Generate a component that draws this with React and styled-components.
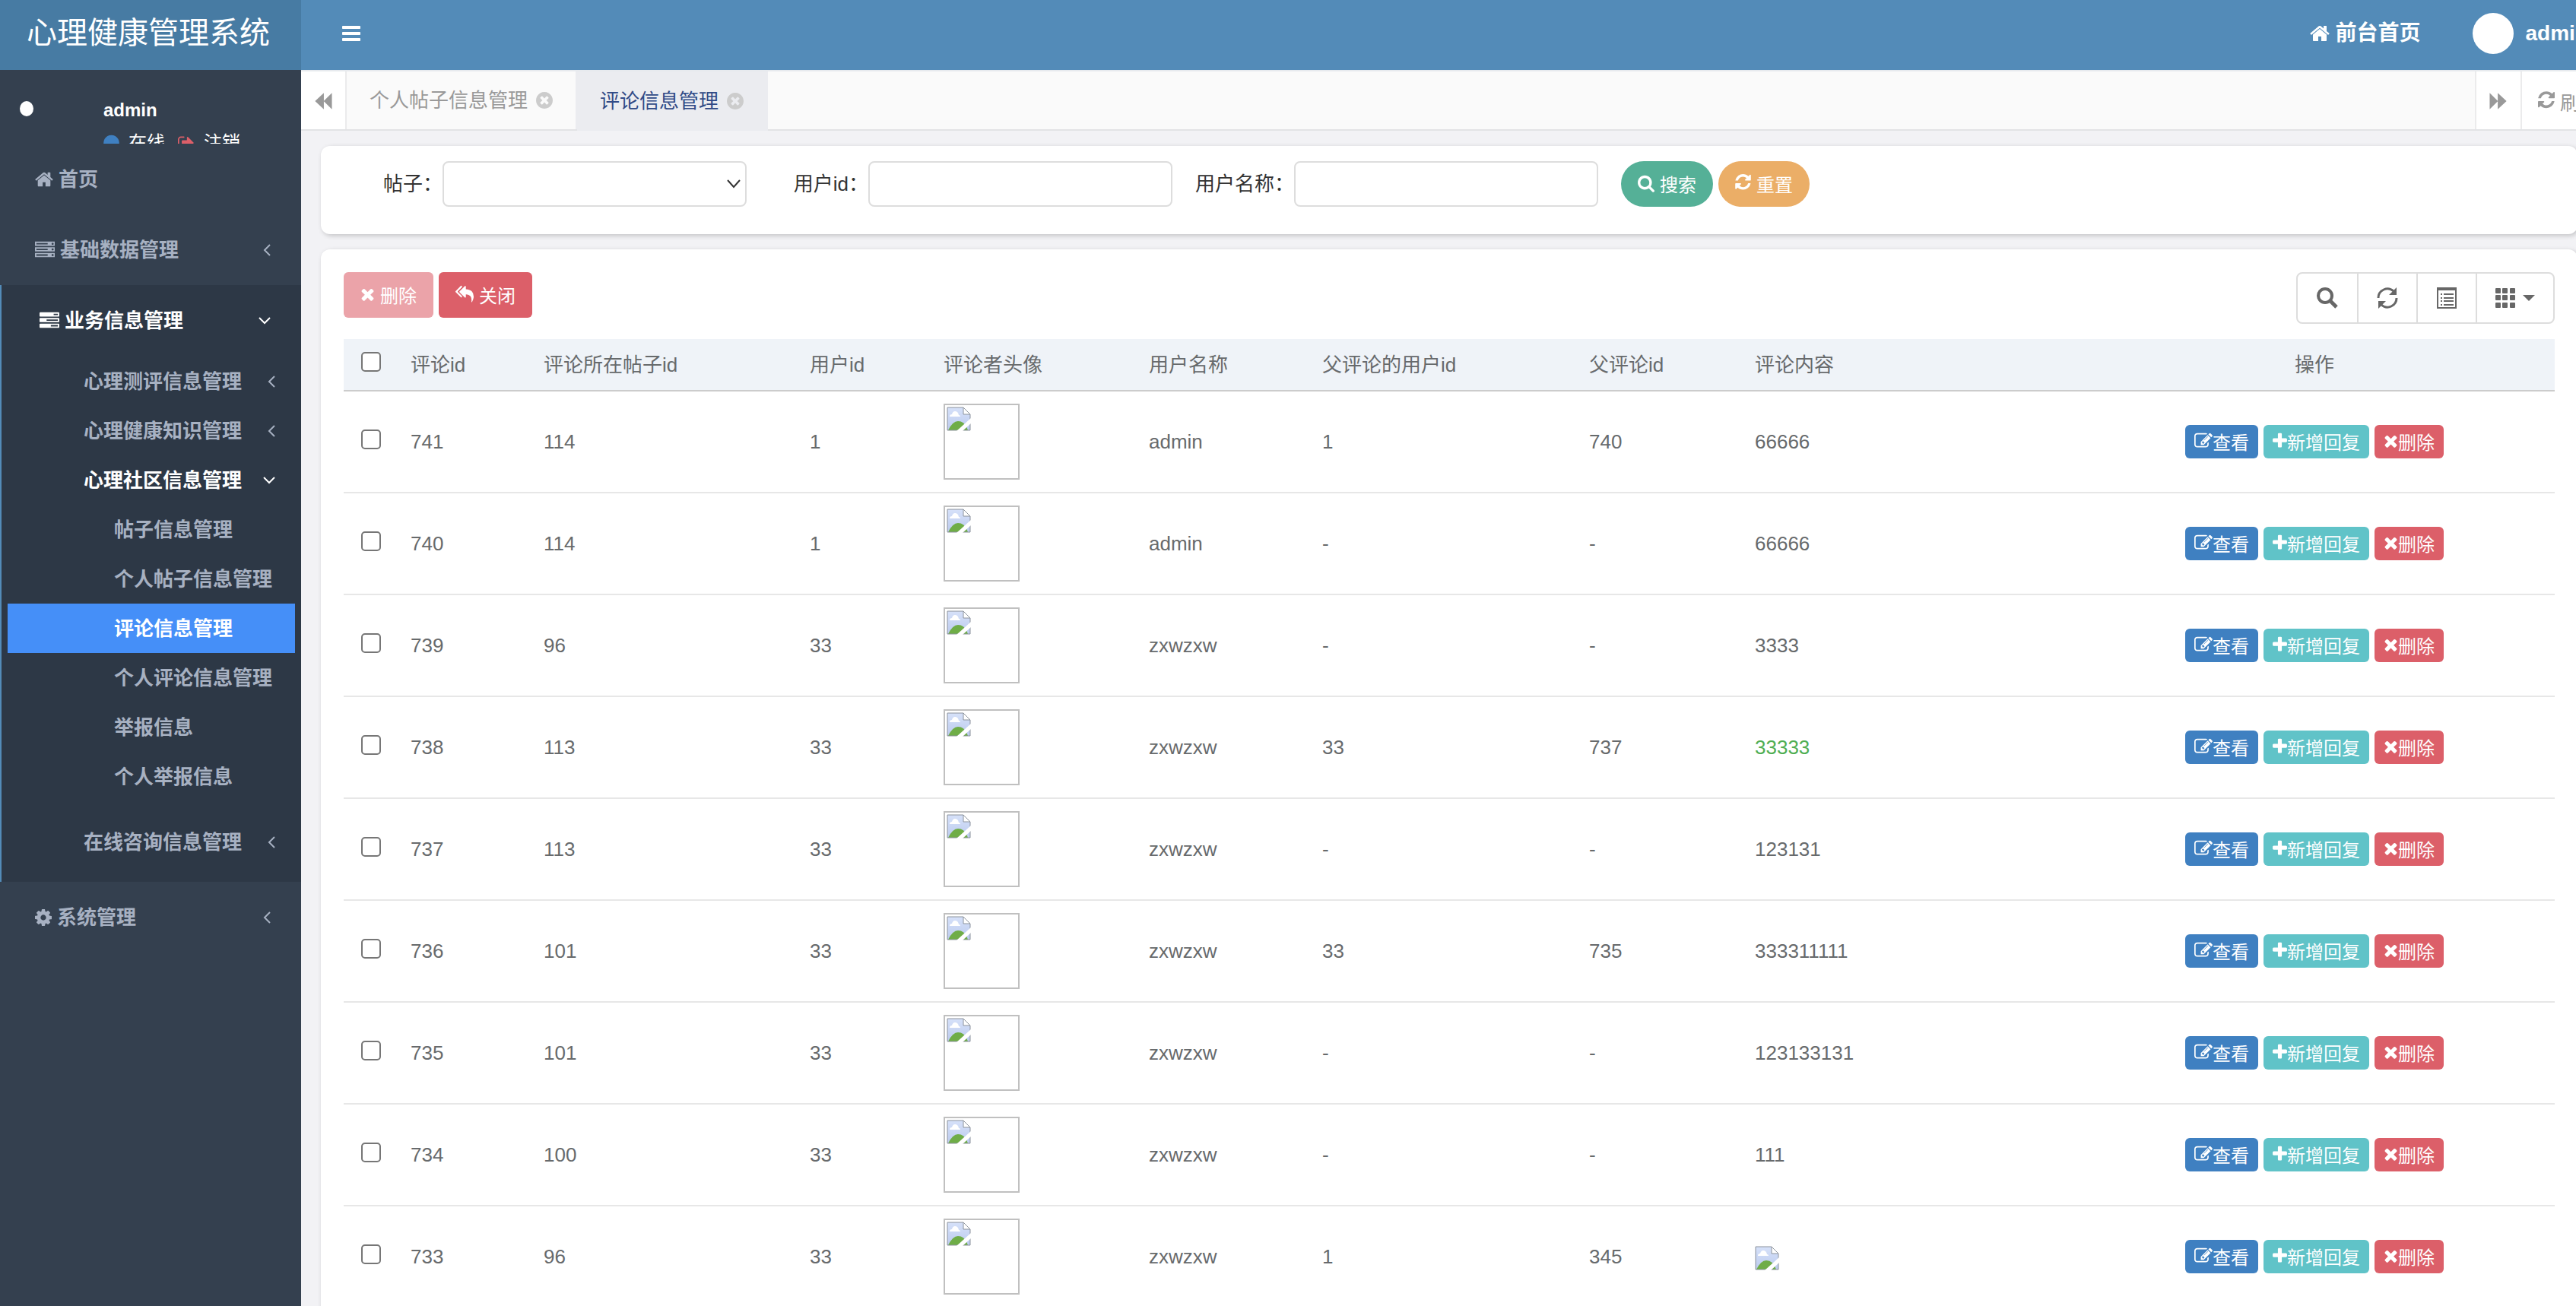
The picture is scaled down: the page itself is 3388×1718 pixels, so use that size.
import { useState } from "react";
import styled, { createGlobalStyle, css } from "styled-components";

const ICONS = {
  home: ["64 0 1664 1792", "M1472 992v480q0 26-19 45t-45 19h-384v-384h-256v384h-384q-26 0-45-19t-19-45v-480q0-1 .5-3t.5-3l575-474 575 474q1 2 1 6zm223-69l-62 74q-8 9-21 11h-3q-13 0-21-7l-692-577-692 577q-12 8-24 7-13-2-21-11l-62-74q-8-10-7-23.5t11-21.5l719-599q32-26 76-26t76 26l244 204v-195q0-14 9-23t23-9h192q14 0 23 9t9 23v408l219 182q10 8 11 21.5t-7 23.5z"],
  search: ["64 0 1664 1792", "M1216 832q0-185-131.5-316.5t-316.5-131.5-316.5 131.5-131.5 316.5 131.5 316.5 316.5 131.5 316.5-131.5 131.5-316.5zm512 832q0 52-38 90t-90 38q-54 0-90-38l-343-342q-179 124-399 124-143 0-273.5-55.5t-225-150-150-225-55.5-273.5 55.5-273.5 150-225 225-150 273.5-55.5 273.5 55.5 225 150 150 225 55.5 273.5q0 220-124 399l343 343q37 37 37 90z"],
  refresh: ["0 0 1536 1792", "M1511 928q0 5-1 7-64 268-268 434.5t-478 166.5q-146 0-282.5-55t-243.5-157l-129 129q-19 19-45 19t-45-19-19-45v-448q0-26 19-45t45-19h448q26 0 45 19t19 45-19 45l-137 137q71 66 161 102t187 36q134 0 250-65t186-179q11-17 53-117 8-23 30-23h192q13 0 22.5 9.5t9.5 22.5zm25-800v448q0 26-19 45t-45 19h-448q-26 0-45-19t-19-45 19-45l138-138q-148-137-349-137-134 0-250 65t-186 179q-11 17-53 117-8 23-30 23h-199q-13 0-22.5-9.5t-9.5-22.5v-7q65-268 270-434.5t480-166.5q146 0 284 55.5t245 156.5l130-129q19-19 45-19t45 19 19 45z"],
  times: ["192 0 1408 1792", "M1490 1322q0 40-28 68l-136 136q-28 28-68 28t-68-28l-294-294-294 294q-28 28-68 28t-68-28l-136-136q-28-28-28-68t28-68l294-294-294-294q-28-28-28-68t28-68l136-136q28-28 68-28t68 28l294 294 294-294q28-28 68-28t68 28l136 136q28 28 28 68t-28 68l-294 294 294 294q28 28 28 68z"],
  plus: ["192 0 1408 1792", "M1600 736v192q0 40-28 68t-68 28h-416v416q0 40-28 68t-68 28h-192q-40 0-68-28t-28-68v-416h-416q-40 0-68-28t-28-68v-192q0-40 28-68t68-28h416v-416q0-40 28-68t68-28h192q40 0 68 28t28 68v416h416q40 0 68 28t28 68z"],
  timesCircle: ["128 0 1536 1792", "M1277 1122q0-26-19-45l-181-181 181-181q19-19 19-45 0-27-19-46l-90-90q-19-19-46-19-26 0-45 19l-181 181-181-181q-19-19-45-19-27 0-46 19l-90 90q-19 19-19 46 0 26 19 45l181 181-181 181q-19 19-19 45 0 27 19 46l90 90q19 19 46 19 26 0 45-19l181-181 181 181q19 19 45 19 27 0 46-19l90-90q19-19 19-46zm387-226q0 209-103 385.5t-279.5 279.5-385.5 103-385.5-103-279.5-279.5-103-385.5 103-385.5 279.5-279.5 385.5-103 385.5 103 279.5 279.5 103 385.5z"],
  cog: ["128 0 1536 1792", "M1152 896q0-106-75-181t-181-75-181 75-75 181 75 181 181 75 181-75 75-181zm512-109v222q0 12-8 23t-20 13l-185 28q-19 54-39 91 35 50 107 138 10 12 10 25t-9 23q-27 37-99 108t-94 71q-12 0-26-9l-138-108q-44 23-91 38-16 136-29 186-7 28-36 28h-222q-14 0-24.5-8.5t-11.5-21.5l-28-184q-49-16-90-37l-141 107q-10 9-25 9-14 0-25-11-126-114-165-168-7-10-7-23 0-12 8-23 15-21 51-66.5t54-70.5q-27-50-41-99l-183-27q-13-2-21-12.5t-8-23.5v-222q0-12 8-23t19-13l186-28q14-46 39-92-40-57-107-138-10-12-10-24 0-10 9-23 26-36 98.5-107.5t94.5-71.5q13 0 26 10l138 107q44-23 91-38 16-136 29-186 7-28 36-28h222q14 0 24.5 8.5t11.5 21.5l28 184q49 16 90 37l142-107q9-9 24-9 13 0 25 10 129 119 165 170 7 8 7 22 0 12-8 23-15 21-51 66.5t-54 70.5q26 50 41 98l183 28q13 2 21 12.5t8 23.5z"],
  replyAll: ["0 0 1792 1792", "M640 1082v70q0 42-39 59-13 5-25 5-27 0-45-19l-512-512q-19-19-19-45t19-45l512-512q29-31 70-14 39 17 39 59v69l-397 398q-19 19-19 45t19 45zm1152 58q0 58-17 133.5t-38.5 138-48 125-40.5 90.5l-20 40q-8 17-28 17-6 0-9-1-25-8-23-34 43-400-106-565-64-71-170.5-110.5t-267.5-52.5v251q0 42-39 59-13 5-25 5-27 0-45-19l-512-512q-19-19-19-45t19-45l512-512q29-31 70-14 39 17 39 59v262q411 28 599 221 169 173 169 509z"],
  edit: ["0 0 1792 1792", "M888 1184l116-116-152-152-116 116v56h96v96h56zm440-720q-16-16-33 1l-350 350q-17 17-1 33t33-1l350-350q17-17 1-33zm80 594v190q0 119-84.5 203.5t-203.5 84.5h-832q-119 0-203.5-84.5t-84.5-203.5v-832q0-119 84.5-203.5t203.5-84.5h832q63 0 117 25 15 7 18 23 3 17-9 29l-49 49q-14 14-32 8-23-6-45-6h-832q-66 0-113 47t-47 113v832q0 66 47 113t113 47h832q66 0 113-47t47-113v-126q0-13 9-22l64-64q15-15 35-7t20 29zm-96-738l288 288-672 672h-288v-288zm444 132l-92 92-288-288 92-92q28-28 68-28t68 28l152 152q28 28 28 68t-28 68z"],
  signOut: ["64 0 1664 1792", "M704 1440q0 4 1 20t.5 26.5-3 23.5-10 19.5-20.5 6.5h-320q-119 0-203.5-84.5t-84.5-203.5v-704q0-119 84.5-203.5t203.5-84.5h320q13 0 22.5 9.5t9.5 22.5q0 4 1 20t.5 26.5-3 23.5-10 19.5-20.5 6.5h-320q-66 0-113 47t-47 113v704q0 66 47 113t113 47h312l11.5 1 11.5 3 8 5.5 7 9 2 13.5zm928-544q0 26-19 45l-544 544q-19 19-45 19t-45-19-19-45v-288h-448q-26 0-45-19t-19-45v-384q0-26 19-45t45-19h448v-288q0-26 19-45t45-19 45 19l544 544q19 19 19 45z"],
  circle: ["128 0 1536 1792", "M1664 896q0 209-103 385.5t-279.5 279.5-385.5 103-385.5-103-279.5-279.5-103-385.5 103-385.5 279.5-279.5 385.5-103 385.5 103 279.5 279.5 103 385.5z"],
  backward: ["64 0 1664 1792", "M1696 144v1504l-736-736v736l-800-752 800-752v736z"],
  forward: ["64 0 1664 1792", "M96 144v1504l736-736v736l800-752-800-752v736z"],
  bars: ["128 0 1536 1792", "M1664 1344v128q0 26-19 45t-45 19h-1408q-26 0-45-19t-19-45v-128q0-26 19-45t45-19h1408q26 0 45 19t19 45zm0-512v128q0 26-19 45t-45 19h-1408q-26 0-45-19t-19-45v-128q0-26 19-45t45-19h1408q26 0 45 19t19 45zm0-512v128q0 26-19 45t-45 19h-1408q-26 0-45-19t-19-45v-128q0-26 19-45t45-19h1408q26 0 45 19t19 45z"],
  tasks: ["0 0 1792 1792", "M1024 1408h640v-128h-640v128zm-384-512h1024v-128h-1024v128zm640-512h384v-128h-384v128zm512 832v256q0 26-19 45t-45 19h-1664q-26 0-45-19t-19-45v-256q0-26 19-45t45-19h1664q26 0 45 19t19 45zm0-512v256q0 26-19 45t-45 19h-1664q-26 0-45-19t-19-45v-256q0-26 19-45t45-19h1664q26 0 45 19t19 45zm0-512v256q0 26-19 45t-45 19h-1664q-26 0-45-19t-19-45v-256q0-26 19-45t45-19h1664q26 0 45 19t19 45z"],
  server: ["0 0 1792 1792", "M128 1408h1024v-128h-1024v128zm0-512h1024v-128h-1024v128zm1568 448q0-40-28-68t-68-28-68 28-28 68 28 68 68 28 68-28 28-68zm-1568-960h1024v-128h-1024v128zm1568 448q0-40-28-68t-68-28-68 28-28 68 28 68 68 28 68-28 28-68zm0-512q0-40-28-68t-68-28-68 28-28 68 28 68 68 28 68-28 28-68zm96 832v384h-1792v-384h1792zm0-512v384h-1792v-384h1792zm0-512v384h-1792v-384h1792z"],
};

function Icon({ name, size = 24 }) {
  const [viewBox, d] = ICONS[name];
  const [, , w, h] = viewBox.split(" ").map(Number);
  return (
    <svg width={Math.round((size * w) / h)} height={size} viewBox={viewBox} fill="currentColor" aria-hidden="true">
      <path fillRule={name === "server" || name === "tasks" ? "evenodd" : "nonzero"} d={d} />
    </svg>
  );
}

function Angle({ open }) {
  return (
    <Arrow width={open ? 16 : 10} height="16" viewBox={open ? "0 0 16 16" : "0 0 10 16"} aria-hidden="true">
      <path d={open ? "M1 4l7 7 7-7" : "M9 1L2 8l7 7"} />
    </Arrow>
  );
}

function BrokenImage() {
  return (
    <svg width="32" height="32" viewBox="0 0 32 32" role="img" aria-label="图片">
      <defs>
        <linearGradient id="sky" x1="0" y1="0" x2="0" y2="1">
          <stop offset="0" stopColor="#d6e1f9" />
          <stop offset="1" stopColor="#bccbee" />
        </linearGradient>
      </defs>
      <path d="M1 1h21l9 9v21H1z" fill="url(#sky)" />
      <path d="M4 13q0-3 3-3 1-4 4-4 4 0 5 5 2 0 2 2z" fill="#fff" />
      <path d="M2 31q6-12 13-12 9 0 13 12z" fill="#6fad47" />
      <path d="M1 1h21l9 9v21H1z" fill="none" stroke="#8b929c" />
      <path d="M22 1v9h9z" fill="#fff" stroke="#8b929c" />
      <path d="M13 32L32 15v7L21 32z" fill="#fff" />
    </svg>
  );
}

const COMMUNITY = ["帖子信息管理", "个人帖子信息管理", "评论信息管理", "个人评论信息管理", "举报信息", "个人举报信息"];

const COLUMNS = [
  ["评论id", 175],
  ["评论所在帖子id", 350],
  ["用户id", 176],
  ["评论者头像", 270],
  ["用户名称", 228],
  ["父评论的用户id", 351],
  ["父评论id", 218],
  ["评论内容", 436],
];

const COMMENTS = [
  { id: 741, post: 114, user: 1, name: "admin", parentUser: "1", parent: "740", content: "66666" },
  { id: 740, post: 114, user: 1, name: "admin", parentUser: "-", parent: "-", content: "66666" },
  { id: 739, post: 96, user: 33, name: "zxwzxw", parentUser: "-", parent: "-", content: "3333" },
  { id: 738, post: 113, user: 33, name: "zxwzxw", parentUser: "33", parent: "737", content: "33333", green: true },
  { id: 737, post: 113, user: 33, name: "zxwzxw", parentUser: "-", parent: "-", content: "123131" },
  { id: 736, post: 101, user: 33, name: "zxwzxw", parentUser: "33", parent: "735", content: "333311111" },
  { id: 735, post: 101, user: 33, name: "zxwzxw", parentUser: "-", parent: "-", content: "123133131" },
  { id: 734, post: 100, user: 33, name: "zxwzxw", parentUser: "-", parent: "-", content: "111" },
  { id: 733, post: 96, user: 33, name: "zxwzxw", parentUser: "1", parent: "345", content: null },
];

export default function App() {
  const [page, setPage] = useState("评论信息管理");
  const [selected, setSelected] = useState([]);

  const toggle = id =>
    setSelected(selected.includes(id) ? selected.filter(s => s !== id) : [...selected, id]);

  const toggleAll = () =>
    setSelected(selected.length === COMMENTS.length ? [] : COMMENTS.map(c => c.id));

  return (
    <Shell>
      <GlobalStyle />

      <Sidebar>
        <Logo>心理健康管理系统</Logo>
        <UserPanel>
          <SmallAvatar />
          <UserInfo>
            <strong>admin</strong>
            <UserLinks>
              <UserLink href="#" $color="#3f80c1"><Icon name="circle" />在线</UserLink>
              <UserLink href="#" $color="#dc5f69"><Icon name="signOut" />注销</UserLink>
            </UserLinks>
          </UserInfo>
        </UserPanel>

        <nav>
          <MenuLink href="#"><Icon name="home" size={26} />首页</MenuLink>
          <MenuLink href="#"><Icon name="server" size={26} />基础数据管理<Angle /></MenuLink>
          <OpenGroup>
            <MenuLink href="#" $active><Icon name="tasks" size={26} />业务信息管理<Angle open /></MenuLink>
            <SubMenu>
              <SubLink href="#">心理测评信息管理<Angle /></SubLink>
              <SubLink href="#">心理健康知识管理<Angle /></SubLink>
              <SubLink href="#" $active>心理社区信息管理<Angle open /></SubLink>
              <PageList>
                {COMMUNITY.map(item => (
                  <PageLink href="#" key={item} $active={item === page} onClick={() => setPage(item)}>
                    {item}
                  </PageLink>
                ))}
              </PageList>
              <SubLink href="#">在线咨询信息管理<Angle /></SubLink>
            </SubMenu>
          </OpenGroup>
          <MenuLink href="#"><Icon name="cog" size={26} />系统管理<Angle /></MenuLink>
        </nav>
      </Sidebar>

      <Main>
        <Header>
          <MenuToggle type="button" aria-label="菜单"><Icon name="bars" size={28} /></MenuToggle>
          <HeaderLink href="#"><Icon name="home" size={28} />前台首页</HeaderLink>
          <HeaderLink href="#"><Avatar />admin</HeaderLink>
        </Header>

        <TabBar>
          <TabButton type="button" aria-label="向左"><Icon name="backward" size={26} /></TabButton>
          <Tabs>
            <Tab href="#">个人帖子信息管理<Icon name="timesCircle" size={26} /></Tab>
            <Tab href="#" $active>评论信息管理<Icon name="timesCircle" size={26} /></Tab>
          </Tabs>
          <TabButton type="button" aria-label="向右" $right><Icon name="forward" size={26} /></TabButton>
          <TabButton type="button" $right $wide><Icon name="refresh" size={26} />刷新</TabButton>
        </TabBar>

        <Content>
          <SearchCard>
            <Field>
              <label htmlFor="post">帖子：</label>
              <SelectBox>
                <select id="post"><option value=""></option></select>
                <svg width="18" height="12" viewBox="0 0 18 12" fill="none" stroke="#333" strokeWidth="2" aria-hidden="true">
                  <path d="M1 1l8 9 8-9" />
                </svg>
              </SelectBox>
            </Field>
            <Field>
              <label htmlFor="userId">用户id：</label>
              <input id="userId" type="text" />
            </Field>
            <Field>
              <label htmlFor="userName">用户名称：</label>
              <input id="userName" type="text" />
            </Field>
            <Buttons>
              <Button type="submit" $round $color="#55b097"><Icon name="search" />搜索</Button>
              <Button type="reset" $round $color="#ebae67"><Icon name="refresh" />重置</Button>
            </Buttons>
          </SearchCard>

          <TableCard>
            <Toolbar>
              <Buttons>
                <Button type="button" $color="#dc5f69" disabled={!selected.length}><Icon name="times" />删除</Button>
                <Button type="button" $color="#dc5f69"><Icon name="replyAll" />关闭</Button>
              </Buttons>
              <ToolGroup>
                <ToolButton type="button" aria-label="搜索">
                  <svg width="28" height="28" viewBox="0 0 28 28" fill="none" stroke="currentColor" aria-hidden="true">
                    <circle cx="11" cy="11" r="9" strokeWidth="4" />
                    <path d="M18 18l8 8" strokeWidth="5" />
                  </svg>
                </ToolButton>
                <ToolButton type="button" aria-label="刷新">
                  <svg width="28" height="28" viewBox="0 0 28 28" fill="none" stroke="currentColor" strokeWidth="3" aria-hidden="true">
                    <path d="M2 14A12 12 0 0 1 22 5" />
                    <path d="M26 14A12 12 0 0 1 6 23" />
                    <path d="M26 0v10H16zM2 28V18h10z" fill="currentColor" stroke="none" />
                  </svg>
                </ToolButton>
                <ToolButton type="button" aria-label="视图">
                  <svg width="28" height="28" viewBox="0 0 28 28" fill="none" stroke="currentColor" strokeWidth="2" aria-hidden="true">
                    <path d="M2 1v26h24V1z" />
                    <path d="M1 2h26" strokeWidth="4" />
                    <path d="M6 9h2M6 14h2M6 18h2M6 23h2M10 9h13M10 14h13M10 18h13M10 23h13" />
                  </svg>
                </ToolButton>
                <ToolButton type="button" aria-label="列" $wide>
                  <svg width="26" height="26" viewBox="0 0 26 26" fill="currentColor" aria-hidden="true">
                    {[0, 9, 19].map(y =>
                      [0, 9, 19].map(x => <rect key={`${x}-${y}`} x={x} y={y} width="7" height="7" rx="1" />)
                    )}
                  </svg>
                  <svg width="16" height="8" viewBox="0 0 16 8" fill="currentColor" aria-hidden="true">
                    <path d="M0 0h16L8 8z" />
                  </svg>
                </ToolButton>
              </ToolGroup>
            </Toolbar>

            <Table>
              <colgroup>
                <Col $w={72} />
                {COLUMNS.map(([title, w]) => <Col key={title} $w={w} />)}
                <Col $w={632} />
              </colgroup>
              <thead>
                <tr>
                  <Th $center>
                    <Check
                      type="checkbox"
                      aria-label="全选"
                      checked={selected.length === COMMENTS.length}
                      onChange={toggleAll}
                    />
                  </Th>
                  {COLUMNS.map(([title]) => <Th key={title}>{title}</Th>)}
                  <Th $center>操作</Th>
                </tr>
              </thead>
              <tbody>
                {COMMENTS.map(c => (
                  <tr key={c.id}>
                    <Td $center>
                      <Check
                        type="checkbox"
                        aria-label={`选择${c.id}`}
                        checked={selected.includes(c.id)}
                        onChange={() => toggle(c.id)}
                      />
                    </Td>
                    <Td>{c.id}</Td>
                    <Td>{c.post}</Td>
                    <Td>{c.user}</Td>
                    <Td><Photo><BrokenImage /></Photo></Td>
                    <Td>{c.name}</Td>
                    <Td>{c.parentUser}</Td>
                    <Td>{c.parent}</Td>
                    <Td $green={c.green}>{c.content ?? <BrokenImage />}</Td>
                    <Td>
                      <Actions>
                        <ActionButton type="button" $color="#3f80c1"><Icon name="edit" />查看</ActionButton>
                        <ActionButton type="button" $color="#60c3c8"><Icon name="plus" />新增回复</ActionButton>
                        <ActionButton type="button" $color="#dc5f69"><Icon name="times" />删除</ActionButton>
                      </Actions>
                    </Td>
                  </tr>
                ))}
              </tbody>
            </Table>
          </TableCard>
        </Content>
      </Main>
    </Shell>
  );
}

// Estilos
const GlobalStyle = createGlobalStyle`
  * {
    box-sizing: border-box;
  }

  body {
    margin: 0;
    font-family: "Liberation Sans", "Noto Sans CJK SC", sans-serif;
    font-size: 26px;
    line-height: 38px;
    color: #676a6c;
    background-color: #f2f2f5;
  }

  a {
    text-decoration: none;
    color: inherit;
  }

  button, input, select {
    font-family: inherit;
    font-size: inherit;
    color: inherit;
  }

  button {
    cursor: pointer;
    padding: 0;
    border: none;
    background: none;
  }

  svg {
    flex-shrink: 0;
  }
`;

const Shell = styled.div`
  display: flex;
  height: 100vh;
  overflow: hidden;
`;

const Sidebar = styled.aside`
  width: 396px;
  flex-shrink: 0;
  background-color: #34404f;
`;

const Logo = styled.div`
  height: 92px;
  padding: 0 6px 6px 0;
  display: flex;
  align-items: center;
  justify-content: center;
  background-color: #477ba3;
  color: #ffffff;
  font-size: 40px;
`;

const UserPanel = styled.div`
  display: flex;
  height: 97px;
  padding: 33px 0 0 26px;
  gap: 92px;
  overflow: hidden;
  color: #ffffff;
  font-size: 24px;
`;

const SmallAvatar = styled.span`
  width: 18px;
  height: 20px;
  margin-top: 8px;
  border-radius: 50%;
  background-color: #ffffff;
`;

const UserInfo = styled.div`
  display: flex;
  flex-direction: column;
  gap: 7px;

  strong {
    line-height: 40px;
  }
`;

const UserLinks = styled.div`
  display: flex;
  gap: 17px;
  line-height: 32px;
`;

const UserLink = styled.a`
  display: flex;
  align-items: center;
  gap: 12px;

  svg {
    color: ${({ $color }) => $color};
  }
`;

const Arrow = styled.svg`
  margin-left: auto;
  fill: none;
  stroke: currentColor;
  stroke-width: 2;
`;

const menuText = css`
  display: flex;
  align-items: center;
  font-weight: bold;
  white-space: nowrap;
  color: ${({ $active }) => ($active ? "#ffffff" : "#a7b1c2")};
`;

const MenuLink = styled.a`
  ${menuText}
  height: 93px;
  padding: 0 40px 0 46px;
  gap: 7px;
`;

const OpenGroup = styled.div`
  border-left: 2px solid #538bb8;
  background-color: #2d3846;

  > a {
    padding-left: 50px;
  }
`;

const SubMenu = styled.div`
  padding: 1px 0 20px;
`;

const SubLink = styled.a`
  ${menuText}
  height: 65px;
  padding: 0 34px 0 108px;
`;

const PageList = styled.div`
  padding: 0 8px 21px;
`;

const PageLink = styled.a`
  ${menuText}
  height: 65px;
  padding-left: 140px;
  background-color: ${({ $active }) => ($active ? "#458ff8" : "transparent")};
`;

/* barra e conteúdo passam um pouco da borda direita */
const Main = styled.main`
  flex: 1;
  min-width: 0;
  margin-right: -52px;
`;

const Header = styled.header`
  display: flex;
  align-items: center;
  height: 92px;
  padding: 0 36px 5px 54px;
  gap: 68px;
  background-color: #538bb8;
  color: #ffffff;
`;

const MenuToggle = styled.button`
  display: flex;
  margin-right: auto;
`;

const HeaderLink = styled.a`
  display: flex;
  align-items: center;
  gap: 8px;
  font-size: 28px;
  font-weight: bold;
`;

const Avatar = styled.span`
  width: 54px;
  height: 54px;
  margin-right: 8px;
  border-radius: 50%;
  background-color: #ffffff;
`;

const TabBar = styled.div`
  display: flex;
  height: 80px;
  border-top: 2px solid #e7eaee;
  border-bottom: 2px solid #e2e3e5;
  background-color: #fafafa;
  color: #999999;
`;

const TabButton = styled.button`
  display: flex;
  align-items: center;
  justify-content: center;
  gap: 7px;
  width: ${({ $wide }) => ($wide ? "125px" : "60px")};
  padding-top: 2px;
  border: 0 solid #ebebec;
  border-left-width: ${({ $right }) => ($right ? "2px" : "0")};
  border-right-width: ${({ $right }) => ($right ? "0" : "2px")};
  background-color: #ffffff;
`;

const Tabs = styled.div`
  flex: 1;
  display: flex;
`;

const Tab = styled.a`
  display: flex;
  align-items: center;
  gap: 11px;
  padding: 0 30px;
  border-right: 2px solid #ebecf0;
  color: ${({ $active }) => ($active ? "#304a86" : "#999999")};
  background-color: ${({ $active }) => ($active ? "#ebecf0" : "transparent")};
  margin-bottom: ${({ $active }) => ($active ? "-2px" : "0")};

  svg {
    color: #cccccc;
  }
`;

const Content = styled.div`
  display: flex;
  flex-direction: column;
  gap: 20px;
  padding: 20px 50px 20px 26px;
`;

const card = css`
  background-color: #ffffff;
  border-radius: 12px;
  box-shadow: 2px 2px 6px rgba(0, 0, 0, 0.2);
`;

const SearchCard = styled.form`
  ${card}
  display: flex;
  gap: 30px;
  padding: 20px 30px 36px;
`;

const Field = styled.div`
  display: flex;
  align-items: center;
  color: #333333;

  label {
    width: 130px;
    text-align: right;
    white-space: nowrap;
  }

  input,
  select {
    width: 400px;
    height: 60px;
    padding: 0 12px;
    border: 2px solid #dddddd;
    border-radius: 8px;
    background-color: #ffffff;
    appearance: none;
  }
`;

const SelectBox = styled.div`
  position: relative;
  display: flex;

  svg {
    position: absolute;
    right: 8px;
    top: 24px;
    pointer-events: none;
  }
`;

const Buttons = styled.div`
  display: flex;
  gap: 7px;
`;

const Button = styled.button`
  display: flex;
  align-items: center;
  gap: 7px;
  height: 60px;
  padding: 0 22px 2px;
  border-radius: ${({ $round }) => ($round ? "30px" : "6px")};
  background-color: ${({ $color }) => $color};
  color: #ffffff;
  font-size: 24px;

  &:disabled {
    background-color: #eba3a9;
    cursor: not-allowed;
  }
`;

const TableCard = styled.section`
  ${card}
  padding: 30px;
`;

const Toolbar = styled.div`
  display: flex;
  justify-content: space-between;
  margin-bottom: 20px;
`;

const ToolGroup = styled.div`
  display: flex;
  border: 2px solid #dddddd;
  border-radius: 8px;
`;

const ToolButton = styled.button`
  display: flex;
  align-items: center;
  justify-content: center;
  gap: 10px;
  width: ${({ $wide }) => ($wide ? "102px" : "78px")};
  height: 64px;
  color: #676767;

  & + & {
    border-left: 2px solid #dddddd;
  }
`;

const Table = styled.table`
  width: 100%;
  table-layout: fixed;
  border-collapse: separate;
  border-spacing: 0;
`;

const Col = styled.col`
  width: ${({ $w }) => $w}px;
`;

const Th = styled.th`
  height: 69px;
  padding: 0 16px;
  text-align: ${({ $center }) => ($center ? "center" : "left")};
  font-weight: normal;
  background-color: #eff3f8;
  border-bottom: 2px solid #cccccc;
`;

const Td = styled.td`
  height: 134px;
  padding: 0 16px;
  text-align: ${({ $center }) => ($center ? "center" : "left")};
  color: ${({ $green }) => ($green ? "#4fae52" : "inherit")};
  border-bottom: 2px solid #e7e7e7;

  svg {
    vertical-align: middle;
  }
`;

const Check = styled.input`
  display: block;
  width: 26px;
  height: 26px;
  margin: 0 auto 7px;
  border: 2px solid #767676;
  border-radius: 5px;
  background-color: #ffffff;
  appearance: none;

  &:checked {
    background-color: #3f80c1;
    border-color: #3f80c1;
  }
`;

const Photo = styled.div`
  display: flex;
  align-items: flex-start;
  width: 100px;
  height: 100px;
  padding: 2px;
  border: 2px solid #c0c0c0;
`;

const Actions = styled.div`
  display: flex;
  justify-content: center;
  gap: 7px;
`;

const ActionButton = styled.button`
  display: flex;
  align-items: center;
  height: 44px;
  padding: 0 12px 2px;
  border-radius: 6px;
  background-color: ${({ $color }) => $color};
  color: #ffffff;
  font-size: 24px;
`;
